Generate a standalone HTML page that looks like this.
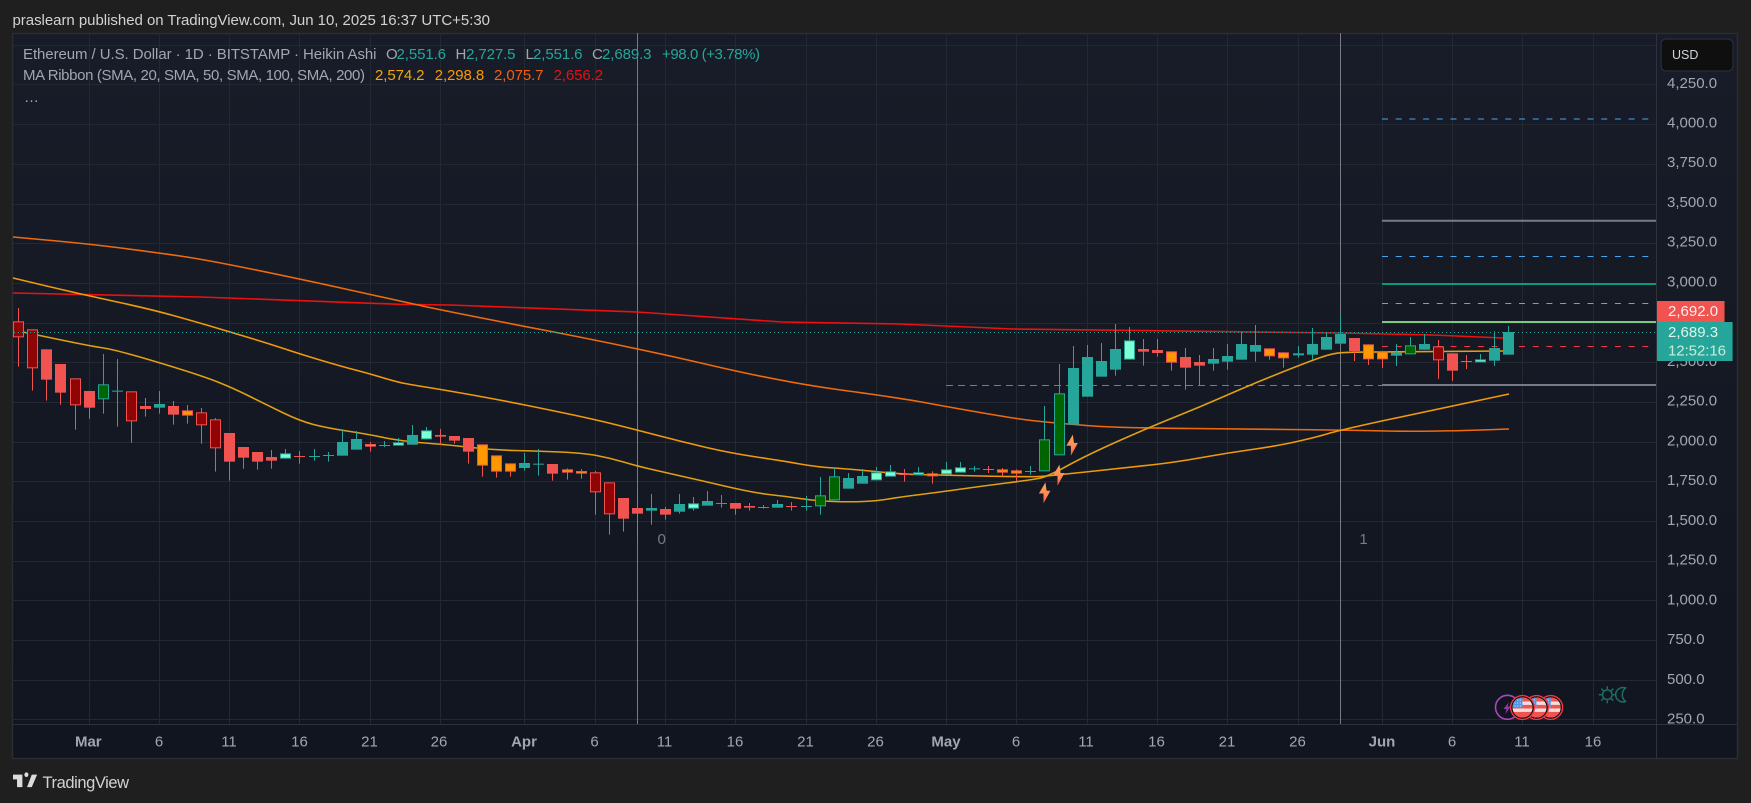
<!DOCTYPE html>
<html><head><meta charset="utf-8"><title>ETH/USD</title>
<style>
html,body{margin:0;padding:0;background:#1f1f1f;overflow:hidden}
svg{display:block}
text{font-family:"Liberation Sans",Arial,sans-serif}
.R{fill:#f05350}.T{fill:#26a69a}
.D,.O,.G,.M{stroke-width:3}
.D{fill:#8f0404;stroke:#f05350}.O{fill:#ff9800;stroke:#f05350}
.G{fill:#006400;stroke:#26a69a}.M{fill:#7fffd4;stroke:#26a69a}
.wr{stroke:#f05350;stroke-width:3;fill:none}.wt{stroke:#26a69a;stroke-width:3;fill:none}
.ma{fill:none;stroke-width:1.6;stroke-linejoin:round}
.p{font-size:15px;fill:#a3a6af}
.t{font-size:15px;fill:#a3a6af;text-anchor:middle}
.l{font-size:15px;fill:#a3a6af}
</style></head><body>
<svg width="1751" height="803" viewBox="0 0 1751 803" xmlns="http://www.w3.org/2000/svg">
<defs>
<linearGradient id="bg" x1="0" y1="0" x2="0" y2="1"><stop offset="0" stop-color="#181c28"/><stop offset="1" stop-color="#11151f"/></linearGradient>
<linearGradient id="bolt" x1="0" y1="0" x2="0" y2="1"><stop offset="0" stop-color="#ffa550"/><stop offset=".6" stop-color="#ff8a50"/><stop offset="1" stop-color="#f05350"/></linearGradient>
<clipPath id="paxis"><rect x="1657" y="34" width="80" height="690"/></clipPath>
<clipPath id="fc"><circle cx="0" cy="0" r="10"/></clipPath>
<g id="flag">
<circle r="12.6" fill="#f23645"/><circle r="11.2" fill="#0d0d0f"/>
<g clip-path="url(#fc)">
<rect x="-10" y="-10" width="20" height="20" fill="#f3dedc"/>
<rect x="-10" y="-10" width="20" height="4" fill="#f05350"/>
<rect x="-10" y="-2.6" width="20" height="3.6" fill="#f05350"/>
<rect x="-10" y="4.4" width="20" height="5.6" fill="#f05350"/>
<rect x="-10" y="-10" width="10" height="10.6" fill="#4e95e6"/>
<path d="M-8-7.5H0M-8-4.5H0M-8-1.5H0" stroke="#cfe3fb" stroke-width="1.1" stroke-dasharray="1.2 1.4" fill="none"/>
</g>
</g>
</defs>

<rect width="1751" height="803" fill="#1f1f1f"/>
<rect x="12.5" y="33.5" width="1725" height="725" fill="url(#bg)" stroke="#2c2d31" stroke-width="1.5"/>

<!-- grid -->
<path fill="none" stroke="#242833" stroke-width="1" d="M13 45.5H1656M13 84.5H1656M13 124.5H1656M13 164.5H1656M13 204.5H1656M13 243.5H1656M13 283.5H1656M13 323.5H1656M13 362.5H1656M13 402.5H1656M13 442.5H1656M13 481.5H1656M13 521.5H1656M13 561.5H1656M13 600.5H1656M13 640.5H1656M13 680.5H1656M13 719.5H1656
M89.5 34V724M159.5 34V724M229.5 34V724M299.5 34V724M370.5 34V724M440.5 34V724M524.5 34V724M595.5 34V724M665.5 34V724M735.5 34V724M806.5 34V724M876.5 34V724M946.5 34V724M1016.5 34V724M1087.5 34V724M1157.5 34V724M1227.5 34V724M1298.5 34V724M1382.5 34V724M1452.5 34V724M1522.5 34V724M1593.5 34V724"/>
<path fill="none" stroke="#2e323d" stroke-width="1" d="M1656.5 34V758M13 724.5H1737"/>

<!-- horizontal levels -->
<g fill="none">
<path d="M1382 119H1650" stroke="#42a5f5" stroke-width="1" stroke-dasharray="6 7.7"/>
<path d="M1382 220.7H1656" stroke="#787b86" stroke-width="2"/>
<path d="M1382 256.5H1650" stroke="#42a5f5" stroke-width="1" stroke-dasharray="6 7.7"/>
<path d="M1382 284H1656" stroke="#089981" stroke-width="2"/>
<path d="M1382 303.5H1650" stroke="#66bb6a" stroke-width="1" stroke-dasharray="6 7.7"/>
<path d="M1382 322H1656" stroke="#81c784" stroke-width="2"/>
<path d="M1382 346.5H1650" stroke="#f23645" stroke-width="1" stroke-dasharray="6 7.7"/>
<path d="M1382 385H1656" stroke="#787b86" stroke-width="2"/>
<path d="M946 385.5H1382" stroke="#787b86" stroke-width="1" stroke-dasharray="7 5"/>
<path d="M637.5 33V724M1340.5 33V724" stroke="#787b86" stroke-width="1"/>
</g>

<!-- MA ribbon -->
<polyline class="ma" stroke="#ee1010" points="13,293 200,297 400,304.3 450,305 637,312 782,322 900,324 1013,329 1340,333 1433,335 1503,338"/>
<path class="ma" stroke="#f06a0c" d="M13,237 L51.5,240.5 Q90,244 125,248.5 Q160,253 183.5,256.5 Q207,260 253.5,269.5 Q300,279 350,290 Q400,301 425,306.5 Q450,312 543.5,330 Q637,348 709.5,365 Q782,382 841,390 Q900,398 921.5,402 Q943,406 971.5,411 Q1000,416 1016.5,418.5 Q1033,421 1056.5,423 Q1080,425 1093.5,426 Q1107,427 1128.5,427.5 Q1150,428 1191.5,428.5 Q1233,429 1286.5,429.5 Q1340,430 1386.5,431 Q1433,432 1509,429"/>
<path class="ma" stroke="#f09a0a" d="M13,278 L46.5,286 Q80,294 115,301.5 Q150,309 175,316 Q200,323 215,327.5 Q230,332 248.5,337.5 Q267,343 283.5,348.5 Q300,354 320,360 Q340,366 353.5,369.5 Q367,373 382,377.5 Q397,382 405,383.5 Q413,385 431.5,388 Q450,391 475,395.5 Q500,400 525,405 Q550,410 573.5,415 Q597,420 617,425 Q637,430 660,436 Q683,442 706.5,447.5 Q730,453 756.5,457 Q783,461 800,464 Q817,467 833.5,468 Q850,469 875,471.5 Q900,474 916.5,474.5 Q933,475 981.5,476 Q1030,477 1038.5,476.5 Q1047,476 1052,475.5 Q1057,475 1095,471 Q1133,467 1155,464.5 Q1177,462 1202,457.5 Q1227,453 1252,449.5 Q1277,446 1297,441.5 Q1317,437 1328.5,433.5 Q1340,430 1386.5,420 Q1433,410 1509,394"/>
<path class="ma" stroke="#e0a010" d="M13,330 L56.5,339 Q90,346 103.5,348 Q117,350 158.5,362.5 Q200,375 216.5,381.5 Q233,388 250,396.5 Q267,405 283.5,413 Q300,421 313.5,424.5 Q327,428 347,431 Q367,434 383.5,437.5 Q400,441 425,443 Q450,445 471.5,447.5 Q493,450 515,450.5 Q537,451 560,452 Q583,453 596.5,455.5 Q610,458 623.5,462 Q637,466 650,469 Q663,472 683,476.5 Q703,481 720,485 Q737,489 750,491.5 Q763,494 773,495 Q783,496 800,498.5 Q817,501 833.5,501.5 Q850,502 863.5,501.5 Q877,501 888.5,499 Q900,497 916.5,495 Q933,493 958,489.5 Q983,486 1006.5,483 Q1030,480 1038.5,478.5 Q1047,477 1067,466 Q1087,455 1118.5,441 Q1150,427 1175,417 Q1200,407 1225,396 Q1250,385 1275,375 Q1300,365 1313.5,360 Q1327,355 1333.5,353.8 Q1340,352.5 1353.5,352.2 Q1367,352 1503,351"/>

<!-- candles -->
<g transform="translate(0,300) scale(.33333)">
<path class="wr" d="M55.5 24V200M97.5 88V272M139.5 148V302M181.5 192V314M226.5 235V389M268.5 273V356M394.5 274V428M436.5 294V350M520.5 303V374M562.5 315V371M604.5 324V431M646.5 354V515M688.5 399V542M730.5 441V506M772.5 456V509M814.5 450V506M898.5 453V491M1111.5 426V455M1321.5 387V434"/>
<path class="wt" d="M310.5 162V341M352.5 177V380M478.5 273V341M856.5 447V476M943.5 447V482M985.5 456V485M1027.5 390V467M1069.5 393V449M1153.5 423V441M1195.5 414V437M1237.5 375V434M1279.5 381V418"/>
<rect class="D" x="40.5" y="65.5" width="30" height="45"/>
<rect class="D" x="82.5" y="89.5" width="30" height="114"/>
<rect class="R" x="123" y="148" width="33" height="91"/>
<rect class="R" x="165" y="192" width="33" height="86"/>
<rect class="D" x="211.5" y="236.5" width="30" height="78"/>
<rect class="R" x="252" y="273" width="33" height="50"/>
<rect class="G" x="295.5" y="254.5" width="30" height="42"/>
<rect class="T" x="336" y="272" width="33" height="3"/>
<rect class="D" x="379.5" y="275.5" width="30" height="87"/>
<rect class="R" x="420" y="318" width="33" height="9"/>
<rect class="T" x="462" y="312" width="33" height="11"/>
<rect class="R" x="504" y="318" width="33" height="26"/>
<rect class="O" x="547.5" y="332.5" width="30" height="13"/>
<rect class="D" x="589.5" y="338.5" width="30" height="36"/>
<rect class="D" x="631.5" y="359.5" width="30" height="84"/>
<rect class="R" x="672" y="399" width="33" height="86"/>
<rect class="R" x="714" y="441" width="33" height="32"/>
<rect class="R" x="756" y="456" width="33" height="29"/>
<rect class="R" x="798" y="471" width="33" height="11"/>
<rect class="M" x="841.5" y="461.5" width="30" height="13"/>
<rect class="R" x="882" y="468" width="33" height="3"/>
<rect class="T" x="927" y="468" width="33" height="3"/>
<rect class="T" x="969" y="465" width="33" height="3"/>
<rect class="T" x="1011" y="426" width="33" height="41"/>
<rect class="T" x="1053" y="417" width="33" height="32"/>
<rect class="O" x="1096.5" y="433.5" width="30" height="5"/>
<rect class="T" x="1137" y="435" width="33" height="3"/>
<rect class="M" x="1180.5" y="428.5" width="30" height="7"/>
<rect class="T" x="1221" y="405" width="33" height="29"/>
<rect class="M" x="1264.5" y="392.5" width="30" height="24"/>
<rect class="R" x="1305" y="405" width="33" height="5"/>
</g>
<g transform="translate(450,400) scale(.33333)">
<path class="wr" d="M13.5 108V131M55.5 114V191M97.5 133V230M139.5 166V233M181.5 190V230M307.5 192V242M352.5 205V239M394.5 207V236M436.5 213V344M478.5 247V404M520.5 294V395M562.5 275V416M646.5 321V359M856.5 309V344M898.5 309V332M940.5 315V326M1024.5 306V332"/>
<path class="wt" d="M223.5 159V212M265.5 147V227M604.5 282V374M688.5 282V341M730.5 291V332M772.5 273V317M814.5 285V323M982.5 300V323M1069.5 288V332M1111.5 231V344M1153.5 204V301M1195.5 219V266M1237.5 207V251M1279.5 201V241M1321.5 195V230"/>
<rect class="R" x="-3" y="108" width="33" height="14"/>
<rect class="R" x="39" y="114" width="33" height="41"/>
<rect class="O" x="82.5" y="134.5" width="30" height="61"/>
<rect class="O" x="124.5" y="167.5" width="30" height="46"/>
<rect class="O" x="166.5" y="191.5" width="30" height="22"/>
<rect class="T" x="207" y="189" width="33" height="15"/>
<rect class="T" x="249" y="191" width="33" height="3"/>
<rect class="R" x="291" y="192" width="33" height="29"/>
<rect class="O" x="337.5" y="209.5" width="30" height="7"/>
<rect class="O" x="379.5" y="214.5" width="30" height="5"/>
<rect class="D" x="421.5" y="218.5" width="30" height="57"/>
<rect class="D" x="463.5" y="248.5" width="30" height="93"/>
<rect class="R" x="504" y="294" width="33" height="62"/>
<rect class="R" x="546" y="324" width="33" height="17"/>
<rect class="T" x="588" y="324" width="33" height="8"/>
<rect class="R" x="630" y="327" width="33" height="17"/>
<rect class="T" x="672" y="312" width="33" height="23"/>
<rect class="M" x="715.5" y="311.5" width="30" height="13"/>
<rect class="T" x="756" y="303" width="33" height="14"/>
<rect class="T" x="798" y="309" width="33" height="3"/>
<rect class="R" x="840" y="309" width="33" height="17"/>
<rect class="R" x="882" y="318" width="33" height="5"/>
<rect class="R" x="924" y="321" width="33" height="3"/>
<rect class="T" x="966" y="312" width="33" height="11"/>
<rect class="R" x="1008" y="318" width="33" height="3"/>
<rect class="T" x="1053" y="318" width="33" height="3"/>
<rect class="G" x="1096.5" y="287.5" width="30" height="30"/>
<rect class="G" x="1138.5" y="230.5" width="30" height="69"/>
<rect class="T" x="1179" y="234" width="33" height="32"/>
<rect class="T" x="1221" y="228" width="33" height="23"/>
<rect class="M" x="1264.5" y="218.5" width="30" height="21"/>
<rect class="M" x="1306.5" y="215.5" width="30" height="13"/>
</g>
<g transform="translate(900,320) scale(.33333)">
<path class="wr" d="M13.5 447V485M97.5 454V491M265.5 438V459M307.5 444V468M349.5 448V483M730.5 57V137M772.5 57V110M814.5 94V152M856.5 84V209M898.5 105V197M1108.5 85V119M1150.5 97V143"/>
<path class="wt" d="M55.5 441V464M139.5 426V463M181.5 426V458M223.5 438V455M391.5 438V464M433.5 258V454M478.5 132V406M520.5 78V314M562.5 75V230M604.5 69V170M646.5 12V167M688.5 21V119M940.5 84V152M982.5 72V149M1024.5 36V119M1066.5 15V125M1195.5 78V113M1237.5 24V119M1279.5 36V89M1321.5 -12V71"/>
<rect class="R" x="-3" y="462" width="33" height="3"/>
<rect class="M" x="40.5" y="458.5" width="30" height="5"/>
<rect class="O" x="82.5" y="461.5" width="30" height="6"/>
<rect class="M" x="124.5" y="449.5" width="30" height="12"/>
<rect class="M" x="166.5" y="443.5" width="30" height="13"/>
<rect class="T" x="207" y="445" width="33" height="3"/>
<rect class="R" x="249" y="447" width="33" height="3"/>
<rect class="O" x="292.5" y="449.5" width="30" height="7"/>
<rect class="O" x="334.5" y="452.5" width="30" height="7"/>
<rect class="T" x="375" y="453" width="33" height="3"/>
<rect class="G" x="418.5" y="359.5" width="30" height="93"/>
<rect class="G" x="463.5" y="221.5" width="30" height="183"/>
<rect class="T" x="504" y="144" width="33" height="170"/>
<rect class="T" x="546" y="111" width="33" height="119"/>
<rect class="T" x="588" y="123" width="33" height="47"/>
<rect class="T" x="630" y="87" width="33" height="62"/>
<rect class="M" x="673.5" y="62.5" width="30" height="55"/>
<rect class="R" x="714" y="87" width="33" height="8"/>
<rect class="R" x="756" y="90" width="33" height="9"/>
<rect class="O" x="799.5" y="95.5" width="30" height="31"/>
<rect class="R" x="840" y="111" width="33" height="32"/>
<rect class="R" x="882" y="126" width="33" height="11"/>
<rect class="T" x="924" y="117" width="33" height="14"/>
<rect class="T" x="966" y="108" width="33" height="17"/>
<rect class="T" x="1008" y="72" width="33" height="47"/>
<rect class="T" x="1050" y="75" width="33" height="20"/>
<rect class="O" x="1093.5" y="86.5" width="30" height="21"/>
<rect class="O" x="1135.5" y="98.5" width="30" height="15"/>
<rect class="M" x="1180.5" y="101.5" width="30" height="3"/>
<rect class="T" x="1221" y="72" width="33" height="32"/>
<rect class="T" x="1263" y="51" width="33" height="38"/>
<rect class="T" x="1305" y="42" width="33" height="29"/>
</g>
<g transform="translate(1300,290) scale(.33333)">
<path class="wr" d="M163.5 144V213M205.5 163V225M247.5 184V234M415.5 150V267M457.5 190V273M499.5 195V237"/>
<path class="wt" d="M289.5 162V228M331.5 141V193M373.5 132V179M541.5 192V217M583.5 124V228M625.5 108V194"/>
<rect class="R" x="147" y="144" width="33" height="39"/>
<rect class="O" x="190.5" y="164.5" width="30" height="42"/>
<rect class="O" x="232.5" y="185.5" width="30" height="21"/>
<rect class="T" x="273" y="188" width="33" height="9"/>
<rect class="G" x="316.5" y="167.5" width="30" height="24"/>
<rect class="T" x="357" y="162" width="33" height="17"/>
<rect class="D" x="400.5" y="170.5" width="30" height="39"/>
<rect class="R" x="441" y="190" width="33" height="52"/>
<rect class="R" x="483" y="213" width="33" height="3"/>
<rect class="M" x="526.5" y="209.5" width="30" height="6"/>
<rect class="T" x="567" y="174" width="33" height="38"/>
<rect class="T" x="609" y="126" width="33" height="68"/>
</g>

<path d="M14 332.5H1656" stroke="#26a69a" stroke-width="1" stroke-dasharray="1 3" fill="none"/>

<!-- bolts -->
<g fill="url(#bolt)">
<path transform="translate(1071.7,445) scale(1.15)" d="M1-9-4.7.7H-.7L-.7 9.3 5.3-1.7H2Z"/>
<path transform="translate(1058.3,475) scale(1.15)" d="M1-9-4.7.7H-.7L-.7 9.3 5.3-1.7H2Z"/>
<path transform="translate(1044.3,492.7) scale(1.15)" d="M1-9-4.7.7H-.7L-.7 9.3 5.3-1.7H2Z"/>
</g>

<!-- event icons -->
<circle cx="1507.5" cy="707.3" r="12" fill="#111520" stroke="#ab47bc" stroke-width="1.6"/>
<path transform="translate(1507,708)" d="M2-6-3.5 1H-.5L-1.5 6 3.5-1.5H.5Z" fill="#8e3da8"/>
<use href="#flag" x="1550.7" y="707.5"/>
<use href="#flag" x="1536.5" y="707.5"/>
<use href="#flag" x="1522.5" y="707.5"/>
<g fill="none" stroke="#1c6e66" stroke-width="1.5">
<circle cx="1607.3" cy="694.7" r="4.8"/>
<path d="M1607.3 689v-2.8M1607.3 700.4v2.8M1601.6 694.7h-2.8M1613 694.7h3.5M1603.3 690.7l-2-2M1611.3 698.7l2 2M1603.3 698.7l-2 2M1611.3 690.7l2-2"/>
<path d="M1625.5 688a7.2 7.2 0 1 0 0 13.4 8.6 8.6 0 0 1 0-13.4Z"/>
</g>

<text x="661.7" y="544" font-size="15" fill="#787b86" text-anchor="middle">0</text>
<text x="1363.5" y="544" font-size="15" fill="#787b86" text-anchor="middle">1</text>

<!-- legend -->
<text class="l" x="23" y="59" textLength="353.5">Ethereum / U.S. Dollar · 1D · BITSTAMP · Heikin Ashi</text>
<text class="l" x="386" y="59">O</text><text class="l" x="396.5" y="59" textLength="49.5" style="fill:#26a69a">2,551.6</text>
<text class="l" x="455.5" y="59">H</text><text class="l" x="466" y="59" textLength="49.5" style="fill:#26a69a">2,727.5</text>
<text class="l" x="525.5" y="59">L</text><text class="l" x="533" y="59" textLength="49.5" style="fill:#26a69a">2,551.6</text>
<text class="l" x="592" y="59">C</text><text class="l" x="602" y="59" textLength="49.5" style="fill:#26a69a">2,689.3</text>
<text class="l" x="662" y="59" textLength="98" style="fill:#26a69a">+98.0 (+3.78%)</text>
<text class="l" x="23" y="80" textLength="342">MA Ribbon (SMA, 20, SMA, 50, SMA, 100, SMA, 200)</text>
<text class="l" x="375" y="80" textLength="49.5" style="fill:#f5a60a">2,574.2</text>
<text class="l" x="434.7" y="80" textLength="49.5" style="fill:#ff9800">2,298.8</text>
<text class="l" x="494" y="80" textLength="49.5" style="fill:#f4600c">2,075.7</text>
<text class="l" x="553.6" y="80" textLength="49.5" style="fill:#e31212">2,656.2</text>
<text class="l" x="24" y="102" style="fill:#a3a6af">…</text>

<!-- price axis -->
<g clip-path="url(#paxis)">
<text class="p" x="1667" y="88">4,250.0</text>
<text class="p" x="1667" y="127.5">4,000.0</text>
<text class="p" x="1667" y="167.2">3,750.0</text>
<text class="p" x="1667" y="207">3,500.0</text>
<text class="p" x="1667" y="246.7">3,250.0</text>
<text class="p" x="1667" y="286.5">3,000.0</text>
<text class="p" x="1667" y="366">2,500.0</text>
<text class="p" x="1667" y="405.7">2,250.0</text>
<text class="p" x="1667" y="445.4">2,000.0</text>
<text class="p" x="1667" y="485.2">1,750.0</text>
<text class="p" x="1667" y="524.9">1,500.0</text>
<text class="p" x="1667" y="564.7">1,250.0</text>
<text class="p" x="1667" y="604.4">1,000.0</text>
<text class="p" x="1667" y="644.2">750.0</text>
<text class="p" x="1667" y="683.9">500.0</text>
<text class="p" x="1667" y="723.7">250.0</text>
</g>

<rect x="1661" y="39" width="72" height="32" rx="5" fill="#0f0f0f" stroke="#2a2e39" stroke-width="1.2"/>
<text x="1672" y="59" font-size="12.5" fill="#d1d4dc">USD</text>

<rect x="1657" y="301" width="68" height="21" fill="#8a3a2a"/>
<rect x="1657" y="301" width="67" height="21" fill="#f05350"/>
<text x="1668" y="316.2" font-size="15" fill="#fdeeee">2,692.0</text>
<rect x="1657" y="322" width="76" height="39" fill="#167068"/>
<rect x="1657" y="322" width="75" height="39" fill="#26a69a"/>
<text x="1668" y="337.2" font-size="15" fill="#dff3e8">2,689.3</text>
<text x="1668" y="355.5" font-size="15" fill="#c8ecd8" textLength="58">12:52:16</text>

<!-- time axis -->
<g>
<text class="t" x="88.3" y="746.5" font-weight="bold">Mar</text>
<text class="t" x="159" y="746.5">6</text>
<text class="t" x="229" y="746.5">11</text>
<text class="t" x="299.5" y="746.5">16</text>
<text class="t" x="369.5" y="746.5">21</text>
<text class="t" x="439" y="746.5">26</text>
<text class="t" x="524" y="746.5" font-weight="bold">Apr</text>
<text class="t" x="594.5" y="746.5">6</text>
<text class="t" x="664.5" y="746.5">11</text>
<text class="t" x="735" y="746.5">16</text>
<text class="t" x="805.5" y="746.5">21</text>
<text class="t" x="875.5" y="746.5">26</text>
<text class="t" x="946" y="746.5" font-weight="bold">May</text>
<text class="t" x="1016" y="746.5">6</text>
<text class="t" x="1086" y="746.5">11</text>
<text class="t" x="1156.5" y="746.5">16</text>
<text class="t" x="1227" y="746.5">21</text>
<text class="t" x="1297.5" y="746.5">26</text>
<text class="t" x="1382" y="746.5" font-weight="bold">Jun</text>
<text class="t" x="1452" y="746.5">6</text>
<text class="t" x="1522" y="746.5">11</text>
<text class="t" x="1593" y="746.5">16</text>
</g>

<!-- header & footer -->
<text x="12.5" y="25" font-size="15" fill="#d2d2d2" textLength="477.5">praslearn published on TradingView.com, Jun 10, 2025 16:37 UTC+5:30</text>
<path transform="translate(13,770) scale(.67,.78)" d="M14 6H0v6h6v10h8V6Zm14 16h-7l7-16h8l-8 16Zm-8-13a3 3 0 1 0 0-6 3 3 0 0 0 0 6Z" fill="#dcdcdc"/>
<text x="42.5" y="788" font-size="16.5" fill="#d2d2d2" textLength="86.5">TradingView</text>
</svg>
</body></html>
